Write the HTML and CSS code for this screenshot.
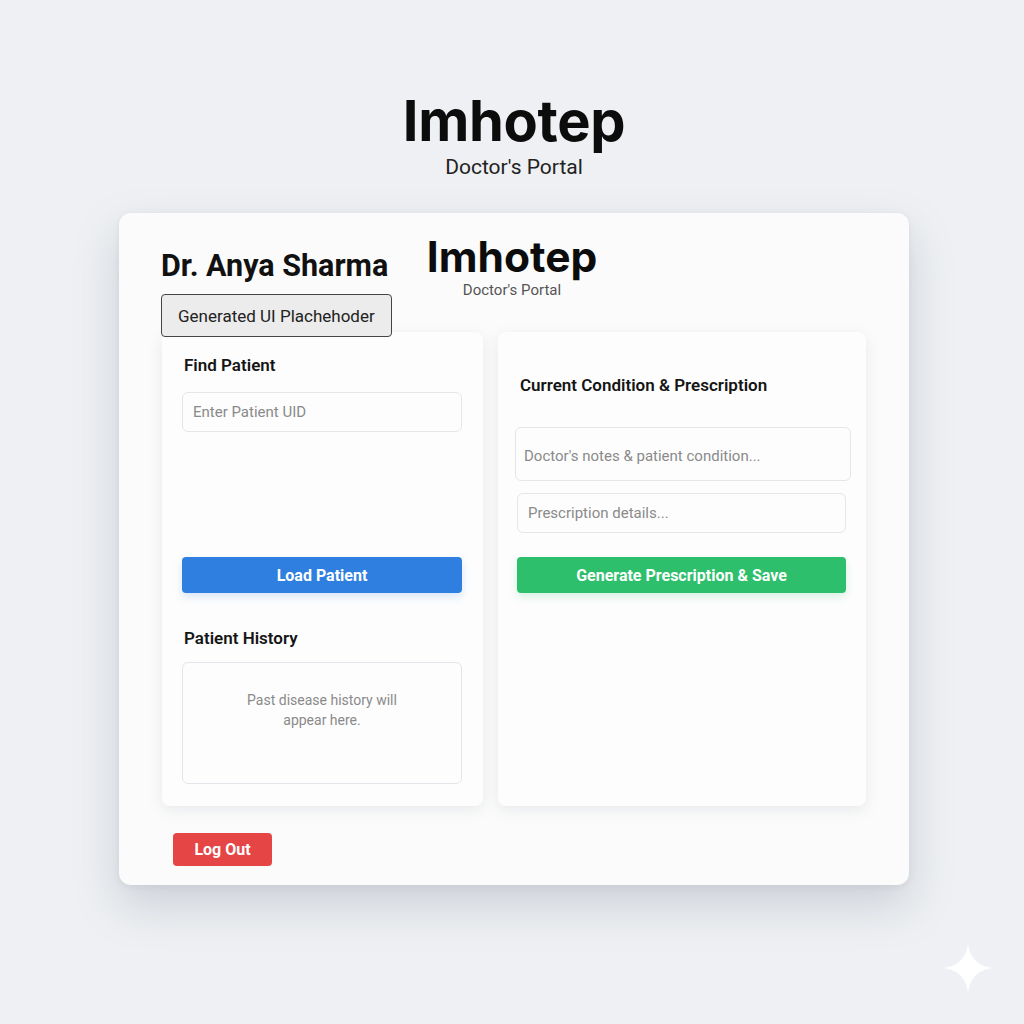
FILE: index.html
```html
<!DOCTYPE html>
<html lang="en">
<head>
<meta charset="utf-8">
<title>Imhotep - Doctor's Portal</title>
<link rel="stylesheet" href="styles.css">
</head>
<body>
<header class="page-header">
  <h1 class="brand">Imhotep</h1>
  <p class="brand-sub">Doctor's Portal</p>
</header>
<main class="card">
  <div class="card-head">
    <div class="doctor">
      <h2 class="doctor-name">Dr. Anya Sharma</h2>
      <button class="placeholder-btn">Generated UI Plachehoder</button>
    </div>
    <div class="inner-brand">
      <div class="inner-title">Imhotep</div>
      <div class="inner-sub">Doctor's Portal</div>
    </div>
    <div></div>
  </div>
  <div class="panels">
    <section class="panel panel-left">
      <h3 class="panel-title">Find Patient</h3>
      <input class="field" type="text" placeholder="Enter Patient UID">
      <button class="btn btn-blue">Load Patient</button>
      <h3 class="panel-title history-title">Patient History</h3>
      <div class="history-box">Past disease history will<br>appear here.</div>
    </section>
    <section class="panel panel-right">
      <h3 class="panel-title cond-title">Current Condition &amp; Prescription</h3>
      <textarea class="field notes" placeholder="Doctor's notes &amp; patient condition..."></textarea>
      <input class="field rx" type="text" placeholder="Prescription details...">
      <button class="btn btn-green">Generate Prescription &amp; Save</button>
    </section>
  </div>
  <button class="btn btn-red">Log Out</button>
</main>
<svg class="sparkle" viewBox="0 0 50 50" width="50" height="50" aria-hidden="true">
  <path d="M25 1 C27 15 35 23 49 25 C35 27 27 35 25 49 C23 35 15 27 1 25 C15 23 23 15 25 1 Z" fill="#ffffff"/>
</svg>
</body>
</html>
```
FILE: styles.css
```css
* { box-sizing: border-box; }
html, body { margin: 0; padding: 0; }
body {
  background: #eef0f3;
  font-family: Roboto, "Liberation Sans", sans-serif;
  color: #1a1a1a;
  min-height: 1024px;
  position: relative;
}
.page-header {
  text-align: center;
  padding-top: 88px;
  padding-left: 4px;
}
.brand {
  margin: 0;
  font-family: Inter, Roboto, sans-serif;
  font-weight: 700;
  font-size: 56px;
  line-height: 66px;
  letter-spacing: -0.3px;
  color: #0c0c0c;
}
.brand-sub {
  margin: 0;
  font-size: 21px;
  line-height: 26px;
  color: #222;
}
.card {
  width: 790px;
  margin: 33px 0 0 119px;
  background: #fbfbfb;
  border-radius: 12px;
  box-shadow: 0 20px 44px rgba(120, 130, 145, 0.28), 0 2px 6px rgba(120,130,145,0.12);
  padding: 35px 42px 20px 42px;
  height: 672px;
}
.card-head {
  display: grid;
  grid-template-columns: 1fr auto 1fr;
  align-items: start;
}
.doctor { display: flex; flex-direction: column; align-items: flex-start; }
.doctor-name {
  margin: 0;
  font-size: 30.5px;
  line-height: 36px;
  font-weight: 700;
  color: #111;
}
.placeholder-btn {
  margin-top: 10px;
  position: relative;
  z-index: 2;
  height: 43px;
  padding: 0 16px;
  background: #ececec;
  border: 1.5px solid #444;
  border-radius: 4px;
  font-family: Roboto, sans-serif;
  font-size: 17px;
  color: #222;
}
.inner-brand { text-align: center; margin-top: -16px; padding-right: 4px; }
.inner-title {
  font-family: Inter, Roboto, sans-serif;
  font-weight: 700;
  font-size: 42.5px;
  line-height: 50px;
  color: #0c0c0c;
}
.inner-sub {
  font-size: 15px;
  line-height: 16px;
  color: #555;
}
.panels {
  display: grid;
  grid-template-columns: 321px 368px;
  gap: 15px;
  margin-top: -5px;
  margin-left: 1px;
}
.panel {
  background: #fdfdfd;
  border-radius: 8px;
  box-shadow: 0 4px 14px rgba(130, 140, 155, 0.16);
  height: 474px;
  display: flex;
  flex-direction: column;
}
.panel-left { padding: 22px 21px 21px 20px; }
.panel-right { padding: 42px 20px 20px 17px; }
.panel-title {
  margin: 0;
  font-size: 17px;
  line-height: 22px;
  font-weight: 600;
  color: #151515;
}
.panel-left .panel-title { margin-left: 2px; }
.cond-title { margin-left: 5px; }
.field {
  display: block;
  width: 100%;
  height: 40px;
  border: 1.5px solid #e4e6ea;
  border-radius: 6px;
  background: #fdfdfd;
  padding: 0 10px;
  font-family: Roboto, sans-serif;
  font-size: 15px;
  color: #333;
  outline: none;
}
.field::placeholder { color: #8a8a8a; }
.panel-left .field { margin-top: 16px; }
.notes {
  margin-top: 31px;
  height: 54px;
  width: 336px;
  resize: none;
  padding: 18px 8px 0;
  line-height: 20px;
  font-size: 15px;
}
.rx { margin-top: 12px; width: 329px; margin-left: 2px; }
.btn {
  border: 0;
  color: #fff;
  font-family: Roboto, sans-serif;
  font-weight: 700;
  font-size: 16px;
  border-radius: 4px;
  cursor: pointer;
}
.btn-blue {
  margin-top: 125px;
  height: 36px;
  width: 100%;
  background: #2f7fe0;
  box-shadow: 0 4px 8px rgba(47, 127, 224, 0.18);
}
.btn-green {
  margin-top: 24px;
  margin-left: 2px;
  height: 36px;
  width: 329px;
  background: #2dbf6c;
  box-shadow: 0 4px 8px rgba(45, 191, 108, 0.18);
}
.history-title { margin-top: 34px; }
.history-box {
  margin-top: 13px;
  height: 122px;
  border: 1.5px solid #e2e5ea;
  border-radius: 6px;
  text-align: center;
  padding-top: 27px;
  font-size: 14px;
  line-height: 20px;
  color: #8a8a8a;
}
.btn-red {
  margin-top: 27px;
  margin-left: 12px;
  width: 99px;
  height: 33px;
  background: #e54545;
  font-size: 16px;
}
.sparkle {
  position: absolute;
  left: 943px;
  top: 943px;
}
```
